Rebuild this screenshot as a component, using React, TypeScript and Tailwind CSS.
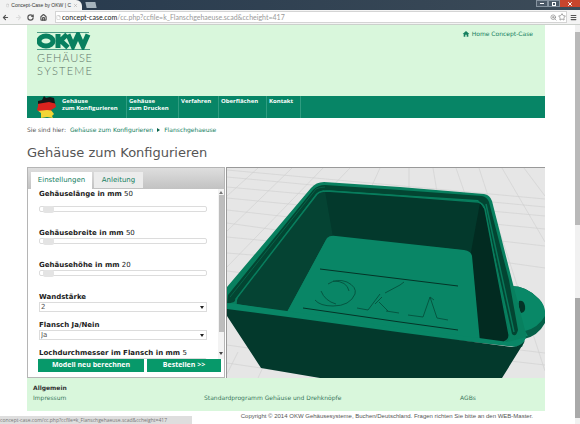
import type { ReactNode } from 'react';
import { MdHome } from 'react-icons/md';
import { ArrowLeft, ArrowRight, File, House, Menu, RotateCw, Star, X, ZoomIn } from 'lucide-react';

const PAGE_URL = 'cc.php?ccfile=k_Flanschgehaeuse.scad&ccheight=417';

const NAV_LINKS = [
  { name: 'Gehäuse', second: 'zum Konfigurieren', style: 'w-[67px]' },
  { name: 'Gehäuse', second: 'zum Drucken', style: 'w-[52px]' },
  { name: 'Verfahren', second: '', style: 'w-[40px]' },
  { name: 'Oberflächen', second: '', style: 'w-[48px]' },
  { name: 'Kontakt', second: '', style: 'w-[34px]' },
];

const BrowserBar = () => {
  return (
    <header className="font-['Liberation_Sans',sans-serif]">
      <div className="flex h-[10px] items-stretch bg-linear-to-r from-[#26394d] to-[#3c4b58]">
        <div className="flex w-[82px] items-center gap-[2px] rounded-tr-md bg-[#f1f2f2] pl-[6px] text-[5px] leading-[8px] text-[#333]">
          <File size={5} color="#aaa" />
          <span className="flex-1 whitespace-nowrap">Concept-Case by OKW | C</span>
          <X size={5} color="#999" className="mr-1 shrink-0" />
        </div>
        <div className="ml-1 h-[6px] w-[10px] skew-x-12 self-center bg-[#a5b3bd]" />
        <div className="ml-auto flex h-[7px] text-white">
          <button className="flex w-3 items-center justify-center border border-[#8794a0] bg-[#4b5967]" aria-label="Minimieren">
            <span className="h-px w-1 bg-white" />
          </button>
          <button className="flex w-3 items-center justify-center border border-[#8794a0] bg-[#4b5967]" aria-label="Maximieren">
            <span className="size-1 border border-white" />
          </button>
          <button className="flex w-5 items-center justify-center bg-[#c8452d]" aria-label="Schließen">
            <X size={6} strokeWidth={4} />
          </button>
        </div>
      </div>
      <div className="flex h-[15px] items-center border-b border-[#ccd0cc] bg-[#f4f4f4] pl-[2px] text-[#555]">
        <ArrowLeft size={7} strokeWidth={4} />
        <ArrowRight size={7} strokeWidth={4} color="#ddd" className="ml-[6px]" />
        <RotateCw size={7} strokeWidth={4} className="ml-[5px]" />
        <House size={7} strokeWidth={4} className="ml-[6px]" />
        <div className="ml-2 flex h-[12px] flex-1 items-center gap-px border border-[#d4d4d4] bg-white">
          <File size={5} color="#aaa" />
          <p className="flex-1 font-['Lato',sans-serif] text-[7px] leading-[10px] text-[#999]">
            <span className="text-[#222]">concept-case.com</span>/{PAGE_URL}
          </p>
          <ZoomIn size={7} color="#777" />
          <Star size={8} color="#777" />
        </div>
        <Menu size={7} strokeWidth={4} className="mx-[3px]" />
      </div>
    </header>
  );
};

const Logo = () => {
  return (
    <div className="w-[55px] pt-[7px]">
      <svg viewBox="0 0 54 18" className="h-[18px] w-[54px]" fill="none" stroke="#08805f">
        <path d="M0 .5H52M0 17.5H53" strokeWidth="1" stroke="#4d9c86" />
        <ellipse cx="9" cy="9" rx="7" ry="5" strokeWidth="5" />
        <path d="M21 2V16M22 10L30 2.500M23 8L31 15.500" strokeWidth="5" />
        <path d="M31 2.500L36 14L41 3L46 14L51 2.500" strokeWidth="5" />
      </svg>
      <div className="mt-px font-['Lato',sans-serif] text-[11px] leading-[13px] font-light text-[#5f7468]">
        <p className="flex justify-between">
          {[...'GEHÄUSE'].map((c, i) => <span key={i}>{c}</span>)}
        </p>
        <p className="flex justify-between">
          {[...'SYSTEME'].map((c, i) => <span key={i}>{c}</span>)}
        </p>
      </div>
    </div>
  );
};

const GermanyIcon = () => {
  return (
    <svg viewBox="0 0 20 23" className="h-[23px] w-5 shrink-0">
      <clipPath id="germany">
        <path d="M7 0L9 2L13 1L17 2L18 7L19 11L14 14L17 18L15 20L16 22L10 21L4 22L4 17L0 14L1 10L1 5L5 4Z" />
      </clipPath>
      <g clipPath="url(#germany)">
        <path d="M0 0H20V8L12 7L0 9Z" fill="#161616" />
        <path d="M0 8L12 6L20 8V15L10 16L0 15Z" fill="#d9231e" />
        <path d="M0 15L10 14L20 15V23H0Z" fill="#f2d535" />
      </g>
    </svg>
  );
};

const Slider = ({ id, label, value, gap }: { id: string; label: string; value: number; gap?: boolean }) => {
  return (
    <div className={gap ? 'flex flex-col gap-[7px]' : 'flex flex-col'}>
      <label htmlFor={id} className="leading-[10px] whitespace-nowrap">
        <b>{label}</b> {value}
      </label>
      <input
        id={id}
        type="range"
        min={0}
        max={100}
        defaultValue={2}
        className="block h-[6px] w-full appearance-none rounded-xs border border-[#dcdcdc] bg-white [&::-webkit-slider-thumb]:h-[7px] [&::-webkit-slider-thumb]:w-[11px] [&::-webkit-slider-thumb]:appearance-none [&::-webkit-slider-thumb]:rounded-xs [&::-webkit-slider-thumb]:bg-[#e4e4e4]"
      />
    </div>
  );
};

const Dropdown = ({ id, label, children }: { id: string; label: string; children: ReactNode }) => {
  return (
    <div className="flex flex-col">
      <label htmlFor={id} className="leading-[10px] font-bold">{label}</label>
      <div className="relative">
        <select id={id} className="block h-[10px] w-full appearance-none border border-[#dcdcdc] bg-white px-px text-[7px] leading-[8px] text-[#555]">
          {children}
        </select>
        <svg viewBox="0 0 4 3" className="pointer-events-none absolute top-[4px] right-[3px] h-[3px] w-1">
          <path d="M0 0H4L2 3Z" fill="#222" />
        </svg>
      </div>
    </div>
  );
};

const Configurator = () => {
  return (
    <section className="flex h-[211px] w-[198px] shrink-0 flex-col border border-[#b5b5b5] bg-white">
      <div role="tablist" className="flex h-[21px] items-end gap-[2px] bg-linear-to-b from-[#dedede] to-[#c2c2c2] pl-[3px] text-[7px] text-[#16805f]">
        <button role="tab" aria-selected="true" className="h-[17px] w-[61px] bg-white">Einstellungen</button>
        <button role="tab" aria-selected="false" className="mb-px h-[16px] w-[49px] bg-[#ececec]">Anleitung</button>
      </div>
      <div className="flex h-[170px] overflow-hidden">
        <form className="flex flex-1 flex-col gap-4 px-[11px] text-[7px] text-[#222]">
          <Slider id="laenge" label="Gehäuselänge in mm" value={50} gap />
          <Slider id="breite" label="Gehäusebreite in mm" value={50} />
          <Slider id="hoehe" label="Gehäusehöhe in mm" value={20} />
          <div className="flex flex-col gap-2">
            <Dropdown id="wand" label="Wandstärke">
              <option>2</option>
              <option>3</option>
            </Dropdown>
            <Dropdown id="flansch" label="Flansch Ja/Nein">
              <option>Ja</option>
              <option>Nein</option>
            </Dropdown>
            <Slider id="loch" label="Lochdurchmesser im Flansch in mm" value={5} />
          </div>
        </form>
        <div className="flex w-[6px] flex-col items-center justify-between bg-[#f3f3f3] pt-[2px] pb-1">
          <svg viewBox="0 0 4 3" className="h-[3px] w-1"><path d="M0 3H4L2 0Z" fill="#777" /></svg>
          <div className="mt-px mb-auto h-[137px] w-[5px] bg-[#bdbdbd]" />
          <svg viewBox="0 0 4 3" className="h-[3px] w-1"><path d="M0 0H4L2 3Z" fill="#444" /></svg>
        </div>
      </div>
      <div className="flex h-[14px] gap-[3px] pr-[3px] pl-[10px] font-['Open_Sans',sans-serif] text-[7px] font-bold text-white">
        <button className="h-[13px] flex-[106] bg-[#07996a] whitespace-nowrap">Modell neu berechnen</button>
        <button className="h-[13px] flex-[74] bg-[#07996a] whitespace-nowrap">Bestellen &gt;&gt;</button>
      </div>
    </section>
  );
};

const Viewer = () => {
  return (
    <div className="h-[211px] flex-1 overflow-hidden border-t border-l border-[#999] bg-[#e6e6e6]">
      <svg viewBox="227 168 318 210" preserveAspectRatio="xMidYMid slice" className="h-full w-full" role="img" aria-label="3D Modell">
        {/* ground grid */}
        <g stroke="#cfcfcf" strokeWidth=".6" fill="none">
          <path d="M227 170L545 199M227 177L545 207M227 187L545 216M227 198L545 229M227 210L545 246M227 223L545 268M227 237L300 244M227 253L290 258M227 271L270 276M227 345L545 390M227 363L545 410M520 350L545 353M510 361L545 365" />
          <path d="M258 168L227 196M292 168L227 231M323 168L227 267M350 168L290 230M380 168L370 190M409 168V190M433 168L437 192M456 168L465 194M479 168L545 371M502 168L545 242M524 168L545 196M227 374L238 352M258 378L264 365" />
        </g>

        {/* flange */}
        <path d="M511 286Q527 286 539 299Q546 306 545 323Q538 336 524 339Z" fill="#056048" />
        <path d="M511 286Q527 286 539 299Q546 306 545 316Q538 328 525 331L528 336L520 337Z" fill="#098867" />
        <path d="M519 301Q524 300 525 306Q526 312 521 313Q518 307 519 301Z" fill="#033427" />

        {/* rim */}
        <path d="M227 287L311 188Q316 182 324 182L400 187L484 194Q490 195 492 201L514 288L526 334Q527 341 516 347L405 334L227 311Z" fill="#08805f" />
        <path d="M228 295L313 190Q318 185 325 185L400 190L482 196Q487 197 489 202L509 280L518 330Q516 338 512 334L484 207L478 200L400 195L324 190L316 194L234 302L227 304Z" fill="#034532" />
        <path d="M230 297L316 189Q320 187 325 187" stroke="#086349" fill="none" />
        <path d="M486 204L514 332" stroke="#08785a" strokeWidth="1.500" fill="none" />

        {/* inner walls */}
        <path d="M236 304L238 297L317 194L325 190L334 192L334 237L326 240L287 312Z" fill="#054333" />
        <path d="M325 191L400 196L479 202L484 209L474 258L460 250L333 237Z" fill="#03392c" />
        <path d="M480 203L485 210L509 334Q510 341 504 342L479 339L471 252Z" fill="#022b21" />
        <path d="M236 304V299L317 194Q320 191 326 191L400 196L478 202Q483 203 485 209L509 334Q510 340 504 342" stroke="#087d5d" strokeWidth="1.500" fill="none" />

        {/* floor */}
        <path d="M327 238Q330 235 336 236L400 243L464 250Q471 251 472 256L480 342L400 334L285 316Z" fill="#098666" />
        <path d="M227 303L236 304L287 311L400 328L479 338L508 342L526 337L522 347L405 335L227 312Z" fill="#098666" />

        {/* front side */}
        <path d="M227 309L288 317L405 333L512 347Q519 347 525 341L502 378H320L261 368L227 316Z" fill="#03392c" />

        {/* embossed logo */}
        <g fill="none" stroke="#04513d" strokeWidth=".9">
          <path d="M320 269L458 286M303 308L400 322L458 330" stroke="#043427" strokeWidth="1" />
          <path d="M328 284Q337 278 347 282Q357 287 355 294Q350 306 333 306Q320 306 315 300" />
          <path d="M321 291Q325 301 336 304M333 281Q347 281 349 291" />
          <path d="M357 308L368 310L380 294M382 297L375 304M386 311L399 313M385 293L400 285L404 282M379 302L388 311" />
          <path d="M408 315L423 317L430 297L437 318L448 320M430 297L434 300" />
        </g>
      </svg>
    </div>
  );
};

const App = () => {
  return (
    <div className="relative flex min-h-screen flex-col bg-white font-['DejaVu_Sans',sans-serif] text-[#555]">
      <BrowserBar />
      <div className="flex flex-1">
        <main className="flex flex-1 flex-col pr-[30px] pl-[27px]">
          <div className="flex h-[71px] items-start justify-between bg-[#d9f7dc] pr-3 pl-[10px]">
            <Logo />
            <a href="#" className="mt-[5px] flex items-center gap-px text-[6px] leading-[8px] text-[#16805f]">
              <MdHome size={8} />
              <span className="pl-px">Home Concept-Case</span>
            </a>
          </div>
          <nav className="flex h-[22px] bg-[#078566] pl-[10px] font-['Open_Sans',sans-serif] text-[6px] leading-[7px] font-bold text-white">
            <GermanyIcon />
            <div className="ml-[3px] flex">
              {NAV_LINKS.map((link, i) => (
                <a href="#" key={i} className={`${link.style} border-r border-[#2f9c80] pt-[2px] pl-[2px] whitespace-nowrap`}>
                  {link.name}
                  <br />
                  {link.second}
                </a>
              ))}
            </div>
          </nav>
          <p className="mt-2 flex items-center gap-1 text-[6px] leading-[8px]">
            Sie sind hier:
            <a href="#" className="text-[#16805f]">Gehäuse zum Konfigurieren</a>
            <svg viewBox="0 0 3 4" className="h-1 w-[3px]"><path d="M0 0V4L3 2Z" fill="#086349" /></svg>
            <a href="#" className="text-[#16805f]">Flanschgehaeuse</a>
          </p>
          <h1 className="mt-[11px] mb-[6px] text-[13px] leading-4">Gehäuse zum Konfigurieren</h1>
          <div className="flex gap-px">
            <Configurator />
            <Viewer />
          </div>
          <footer>
            <div className="h-[33px] bg-[#d9f7dc] px-[6px] pt-[6px] text-[6px] leading-[8px] text-[#39775d]">
              <p className="font-bold text-[#333]">Allgemein</p>
              <div className="mt-[2px] grid grid-cols-[171px_256px_1fr]">
                <a href="#">Impressum</a>
                <a href="#">Standardprogramm Gehäuse und Drehknöpfe</a>
                <a href="#">AGBs</a>
              </div>
            </div>
            <p className="pt-px pr-3 text-right font-['Liberation_Sans',sans-serif] text-[6px] leading-[8px]">
              Copyright © 2014 OKW Gehäusesysteme, Buchen/Deutschland. Fragen richten Sie bitte an den WEB-Master.
            </p>
          </footer>
        </main>
        <div className="flex w-[5px] flex-col bg-[#f1f1f1] pt-[7px] pb-[6px]">
          <div className="flex-[193] bg-[#b9b9b9]" />
          <div className="flex-[73]" />
          <div className="flex-[120] bg-[#a9a9a9]" />
        </div>
      </div>
      <p className="absolute bottom-0 left-0 h-2 w-[192px] truncate bg-[#dedede] font-['Open_Sans',sans-serif] text-[5px] leading-[8px] text-[#777]">
        concept-case.com/{PAGE_URL}
      </p>
    </div>
  );
};

export default App;
